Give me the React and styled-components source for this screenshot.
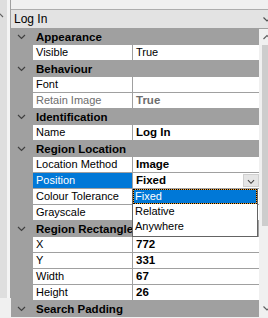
import React from "react"
import styled, { createGlobalStyle } from "styled-components"

const GlobalStyle = createGlobalStyle`
  html, body {
    margin: 0;
    padding: 0;
    background: #f0f0f0;
  }
  body {
    font-family: "Liberation Sans", Tahoma, Arial, sans-serif;
    font-size: 11px;
    color: #000;
  }
`

const rows = [
  { category: "Appearance" },
  { name: "Visible", value: "True" },
  { category: "Behaviour" },
  { name: "Font", value: "" },
  { name: "Retain Image", value: "True", bold: true, disabled: true },
  { category: "Identification" },
  { name: "Name", value: "Log In", bold: true },
  { category: "Region Location" },
  { name: "Location Method", value: "Image", bold: true },
  { name: "Position", value: "Fixed", bold: true, selected: true },
  { name: "Colour Tolerance", value: "" },
  { name: "Grayscale", value: "" },
  { category: "Region Rectangle" },
  { name: "X", value: "772", bold: true },
  { name: "Y", value: "331", bold: true },
  { name: "Width", value: "67", bold: true },
  { name: "Height", value: "26", bold: true },
  { category: "Search Padding" },
]

const options = ["Fixed", "Relative", "Anywhere"]

const Chevron = ({ up, width = 9, height = 16, cx = 4.5, cy = 8, color = "#404040" }) => (
  <svg width={width} height={height} viewBox={`0 0 ${width} ${height}`}>
    <polyline
      points={
        up
          ? `${cx - 3.5},${cy + 2} ${cx},${cy - 1.5} ${cx + 3.5},${cy + 2}`
          : `${cx - 3.5},${cy - 1.5} ${cx},${cy + 2} ${cx + 3.5},${cy - 1.5}`
      }
      fill="none"
      stroke={color}
      strokeWidth="1.2"
    />
  </svg>
)

const PropertyGrid = () => (
  <>
    <GlobalStyle />
    <Screen>
      <SideStrip>
        <SideTrack>
          <SideBar>
            <SideArrow>
              <Chevron up width={7} height={8} cx={-0.5} cy={4} color="#606060" />
            </SideArrow>
          </SideBar>
          <SideGap />
        </SideTrack>
      </SideStrip>

      <Panel>
        <Header>
          <HeaderText>Log In</HeaderText>
          <Chevron width={9} height={18} cx={8} cy={9} color="#505050" />
        </Header>

        <Body>
          <Grid>
            {rows.map((row, i) =>
              row.category ? (
                <CategoryRow key={i}>
                  <Margin>
                    <Chevron width={22} height={16} cx={10.5} cy={7.5} color="#404040" />
                  </Margin>
                  <CategoryLabel>{row.category}</CategoryLabel>
                </CategoryRow>
              ) : (
                <PropertyRow key={i}>
                  <Margin />
                  <NameCell $selected={row.selected} $disabled={row.disabled}>
                    {row.name}
                  </NameCell>
                  <ValueCell $bold={row.bold} $disabled={row.disabled}>
                    <ValueText>{row.value}</ValueText>
                    {row.selected && (
                      <>
                        <DropButton>
                          <Chevron width={16} height={13} cx={8} cy={6.5} color="#404040" />
                        </DropButton>
                        <DropList>
                          {options.map((opt, j) => (
                            <DropItem key={opt} $active={j === 0}>
                              {opt}
                            </DropItem>
                          ))}
                        </DropList>
                      </>
                    )}
                  </ValueCell>
                </PropertyRow>
              )
            )}
          </Grid>

          <ScrollBar>
            <ScrollArrow>
              <Chevron up width={9} height={16} cx={8} cy={8} color="#606060" />
            </ScrollArrow>
            <ScrollTrack>
              <ScrollThumb />
            </ScrollTrack>
            <ScrollArrow>
              <Chevron width={9} height={16} cx={8} cy={6} color="#606060" />
            </ScrollArrow>
          </ScrollBar>
        </Body>
      </Panel>
    </Screen>
  </>
)

const Screen = styled.div`
  display: flex;
  width: 268px;
  height: 318px;
  overflow: hidden;
`

const SideStrip = styled.div`
  width: 11px;
  flex-shrink: 0;
  display: flex;
  flex-direction: column;
`

const SideTrack = styled.div`
  height: 298px;
  display: flex;
`

const SideBar = styled.div`
  width: 7px;
  background: #dedede;
`

const SideArrow = styled.div`
  margin-top: 11px;
  display: flex;
`

const SideGap = styled.div`
  width: 4px;
  background: #f4f4f4;
  border-right: 1px solid #a0a0a0;
`

const Panel = styled.div`
  flex: 1;
  display: flex;
  flex-direction: column;
  padding-top: 9px;
  min-width: 0;
`

const Header = styled.div`
  height: 20px;
  box-sizing: border-box;
  display: flex;
  align-items: center;
  background: #e3e3e3;
  border-top: 1px solid #adadad;
  border-bottom: 1px solid #a0a0a0;
  padding-left: 3px;
`

const HeaderText = styled.span`
  flex: 1;
  font-size: 12px;
`

const Body = styled.div`
  flex: 1;
  display: flex;
  min-height: 0;
`

const Grid = styled.div`
  flex: 1;
  display: flex;
  flex-direction: column;
`

const RowBase = styled.div`
  display: grid;
  grid-template-columns: 22px 100px 1fr;
  height: 16px;
  box-sizing: border-box;
`

const CategoryRow = styled(RowBase)`
  background: #a0a0a0;
`

const PropertyRow = styled(RowBase)`
  background: #a0a0a0;
`

const Margin = styled.div`
  display: flex;
  align-items: center;
`

const CategoryLabel = styled.div`
  grid-column: 2 / 4;
  font-weight: bold;
  font-size: 11.5px;
  line-height: 16px;
  padding-left: 3px;
  white-space: nowrap;
`

const NameCell = styled.div`
  background: ${(p) => (p.$selected ? "#0078d7" : "#fff")};
  color: ${(p) => (p.$selected ? "#fff" : p.$disabled ? "#6d6d6d" : "#000")};
  border-right: 1px solid #a0a0a0;
  border-bottom: 1px solid #a0a0a0;
  line-height: 15px;
  padding-left: 3px;
  white-space: nowrap;
  overflow: hidden;
`

const ValueCell = styled.div`
  position: relative;
  display: flex;
  align-items: center;
  background: #fff;
  border-bottom: 1px solid #a0a0a0;
  font-weight: ${(p) => (p.$bold ? "bold" : "normal")};
  font-size: ${(p) => (p.$bold ? "11.5px" : "11px")};
  color: ${(p) => (p.$disabled ? "#6d6d6d" : "#000")};
  padding-left: 3px;
`

const ValueText = styled.span`
  flex: 1;
  line-height: 15px;
  white-space: nowrap;
`

const DropButton = styled.div`
  width: 16px;
  height: 13px;
  display: flex;
  background: #e5e5e5;
  border: 1px solid #d0d0d0;
  box-sizing: border-box;
  margin-right: 0;
`

const DropList = styled.div`
  position: absolute;
  top: 16px;
  left: -1px;
  width: 126px;
  height: 48px;
  box-sizing: border-box;
  background: #fff;
  border: 1px solid #646464;
  border-top: none;
  font-weight: normal;
  font-size: 11px;
  color: #000;
  z-index: 2;
`

const DropItem = styled.div`
  height: 15px;
  line-height: 13px;
  box-sizing: border-box;
  padding-left: 1px;
  border: 1px solid transparent;
  ${(p) =>
    p.$active &&
    `
    color: #fff;
    border: 1px dotted #000;
    background: linear-gradient(#0078d7, #0078d7) padding-box, #f0a030 border-box;
  `}
`

const ScrollBar = styled.div`
  width: 9px;
  flex-shrink: 0;
  display: flex;
  flex-direction: column;
  background: #f0f0f0;
`

const ScrollArrow = styled.div`
  height: 16px;
  display: flex;
`

const ScrollTrack = styled.div`
  flex: 1;
  display: flex;
  flex-direction: column;
`

const ScrollThumb = styled.div`
  height: 181px;
  margin-left: 3px;
  background: #cdcdcd;
`

export default PropertyGrid
